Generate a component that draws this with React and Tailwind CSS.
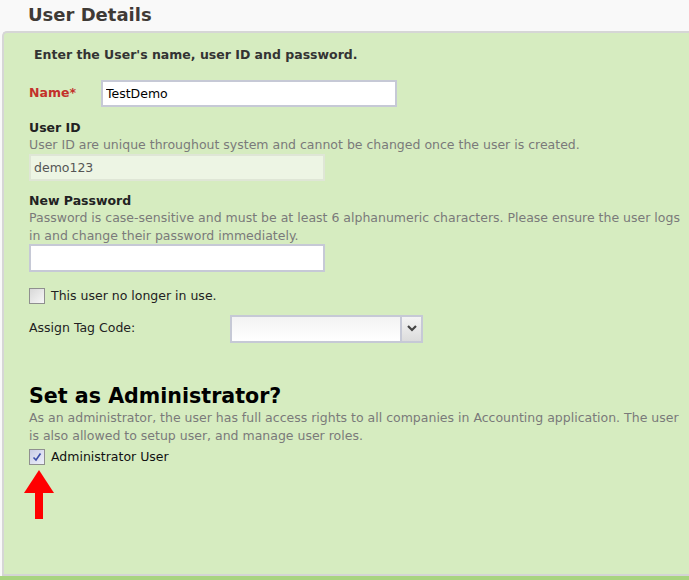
import { useState } from "react";

const font = { fontFamily: '"DejaVu Sans", Verdana, sans-serif' };

function Checkbox({ checked }) {
  return (
    <span
      className={
        "flex h-[16px] w-[16px] shrink-0 items-center justify-center border border-[#8f8f8f] bg-gradient-to-br " +
        (checked ? "from-[#c9cde6] to-[#eef0fa]" : "from-[#d8d8d8] to-[#f7f7f7]")
      }
    >
      {checked && (
        <svg width="10" height="10" viewBox="0 0 10 10">
          <path d="M1.5 5.5 L4 8 L8.5 1.5" fill="none" stroke="#3b4fa8" strokeWidth="1.6" />
        </svg>
      )}
    </span>
  );
}

function App() {
  const [name, setName] = useState("TestDemo");
  const [password, setPassword] = useState("");

  return (
    <div className="h-[580px] w-[689px] overflow-hidden bg-[#f9f9f9]" style={font}>
      <div className="h-[31px] pl-[28px] pt-[2px]">
        <h1 className="text-[18px] font-bold leading-[26px] text-[#3f3a36]">User Details</h1>
      </div>

      <div className="ml-[2px] flex h-[543px] flex-col rounded-tl-[5px] border-l-2 border-t-2 border-[#d6d6d6] bg-[#d6ecc0] pl-[25px] text-[12.5px] text-[#222]">
        <p className="mt-[13px] pl-[5px] font-bold leading-[18px] text-[#333]">
          Enter the User's name, user ID and password.
        </p>

        <div className="mt-[16px] flex items-center">
          <label className="w-[72px] font-bold text-[#c3312b]">Name*</label>
          <input
            type="text"
            value={name}
            onChange={(e) => setName(e.target.value)}
            className="h-[27px] w-[296px] border-2 border-[#c6c9d6] bg-white px-[3px] text-[12.5px] text-black outline-none"
            style={font}
          />
        </div>

        <div className="mt-[13px] font-bold leading-[16px] text-[#222]">User ID</div>
        <div className="whitespace-nowrap leading-[18px] text-[#7a7a7a]">
          User ID are unique throughout system and cannot be changed once the user is created.
        </div>
        <input
          type="text"
          value="demo123"
          disabled
          className="h-[27px] w-[296px] border-2 border-[#dfe6d6] bg-[#edf5e4] px-[3px] text-[12.5px] text-[#555] outline-none"
          style={font}
        />

        <div className="mt-[12px] font-bold leading-[16px] text-[#222]">New Password</div>
        <div className="whitespace-nowrap leading-[18px] text-[#7a7a7a]">
          Password is case-sensitive and must be at least 6 alphanumeric characters. Please ensure the user logs
          <br />
          in and change their password immediately.
        </div>
        <input
          type="password"
          value={password}
          onChange={(e) => setPassword(e.target.value)}
          className="mt-[-1px] h-[28px] w-[296px] border-2 border-[#c6c9d6] bg-white px-[3px] outline-none"
        />

        <div className="mt-[15px] flex items-center gap-[6px]">
          <Checkbox />
          <span className="text-[#222]">This user no longer in use.</span>
        </div>

        <div className="mt-[9px] flex items-center">
          <span className="w-[201px] text-[#222]">Assign Tag Code:</span>
          <div className="flex h-[28px] w-[193px] border-2 border-[#c6c9d6]">
            <div className="flex-1 bg-gradient-to-b from-[#f3f3f3] to-white" />
            <div className="flex w-[21px] items-center justify-center border-l-2 border-[#c6c9d6] bg-gradient-to-b from-[#f4f4f4] to-[#dcdcdc]">
              <svg width="10" height="7" viewBox="0 0 10 7">
                <path d="M1 1 L5 5 L9 1" fill="none" stroke="#444" strokeWidth="2.2" />
              </svg>
            </div>
          </div>
        </div>

        <h2 className="mt-[41px] text-[20.6px] font-bold leading-[25px] text-black">Set as Administrator?</h2>
        <div className="whitespace-nowrap leading-[18px] text-[#7a7a7a]">
          As an administrator, the user has full access rights to all companies in Accounting application. The user
          <br />
          is also allowed to setup user, and manage user roles.
        </div>
        <div className="mt-[3px] flex items-center gap-[6px]">
          <Checkbox checked />
          <span className="text-[#111]">Administrator User</span>
        </div>

        <svg className="ml-[-6px] mt-[3px]" width="32" height="49" viewBox="0 0 32 49">
          <polygon points="16,0 31,23 1,23" fill="#ff0000" />
          <rect x="12" y="22" width="8" height="27" fill="#ff0000" />
        </svg>
      </div>

      <div className="ml-[2px] h-[2px] bg-[#d4d4d4]" />
      <div className="h-[4px] bg-[#a8d47f]" />
    </div>
  );
}

export default App;
